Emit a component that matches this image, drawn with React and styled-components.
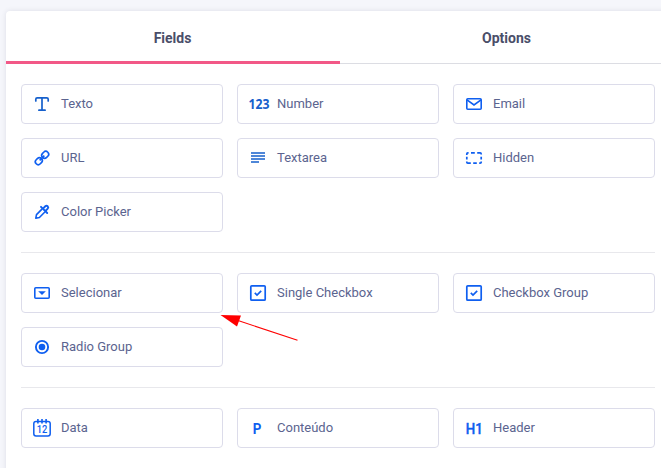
import React from 'react';
import styled, { createGlobalStyle } from 'styled-components';

const colors = {
  page: '#f5f6fb',
  white: '#ffffff',
  pink: '#f25887',
  border: '#dcdcea',
  line: '#dcdde3',
  title: '#4a4e69',
  text: '#5b648f',
  blue: '#0f5ff0',
  navy: '#1660cc'
};

const TextIcon = () => (
  <Icon>
    <path
      d="M5.8 8.9V7.2Q5.8 5.8 7.2 5.8H16.8Q18.2 5.8 18.2 7.2V8.9M12 5.8V18.2M8.9 18.2H15.1"
      stroke={colors.navy}
      strokeWidth="1.7"
      strokeLinecap="round"
    />
  </Icon>
);

const NumberIcon = () => (
  <Icon>
    <Glyph x="2.6" y="17.2" $color={colors.navy} $size={14.6} $family="Noto Sans" textLength="21" lengthAdjust="spacingAndGlyphs">
      123
    </Glyph>
  </Icon>
);

const EmailIcon = () => (
  <Icon>
    <rect x="4.8" y="6.8" width="14.4" height="10.4" rx="1" strokeWidth="1.6" />
    <path d="M5 7.8L12 13L19 7.8" strokeWidth="1.6" />
  </Icon>
);

const LinkIcon = () => (
  <Icon>
    <g transform="rotate(-45 12 12)" strokeWidth="1.6">
      <rect x="3.8" y="9.1" width="7.4" height="5.8" rx="2.9" />
      <rect x="12.8" y="9.1" width="7.4" height="5.8" rx="2.9" />
      <path d="M8.7 12H15.3" />
    </g>
  </Icon>
);

const TextareaIcon = () => (
  <Icon>
    <path
      d="M5 7H19M5 10H19M5 13H19M5 16H13"
      stroke={colors.navy}
      strokeWidth="1.7"
    />
  </Icon>
);

const HiddenIcon = () => (
  <Icon>
    <path
      d="M4.8 9V7.9Q4.8 6.9 5.8 6.9H6.6M9 6.9H12.8M15.2 6.9H18.2Q19.2 6.9 19.2 7.9V8.6M19.2 10.8V13.4M19.2 15.4V16.2Q19.2 17.1 18.2 17.1H17.2M14.8 17.1H11.2M8.8 17.1H5.8Q4.8 17.1 4.8 16.2V15.4M4.8 13.4V10.8"
      strokeWidth="1.7"
    />
  </Icon>
);

const PickerIcon = () => (
  <Icon>
    <path
      d="M12.2 8.9L6.5 14.6L5.8 18.2L9.4 17.5L15.1 11.8"
      strokeWidth="1.6"
      strokeLinejoin="round"
    />
    <path d="M11 6.8L17.2 13" strokeWidth="1.9" strokeLinecap="round" />
    <path
      d="M13 8.6L15.3 6.3Q16.5 5.2 17.7 6.3Q18.8 7.5 17.7 8.7L15.4 11"
      strokeWidth="1.9"
    />
  </Icon>
);

const SelectIcon = () => (
  <Icon>
    <rect x="4.8" y="6.8" width="14.4" height="10.4" rx="1" strokeWidth="1.6" />
    <path d="M8.2 10.2H15.8L12 14Z" fill={colors.blue} stroke="none" />
  </Icon>
);

const CheckboxIcon = () => (
  <Icon>
    <rect x="4.8" y="4.8" width="14.4" height="14.4" rx="1" strokeWidth="1.7" />
    <path d="M8.8 11.8L11 14L15.2 9.8" strokeWidth="1.7" />
  </Icon>
);

const RadioIcon = () => (
  <Icon>
    <circle cx="12" cy="12" r="6.1" strokeWidth="1.9" />
    <circle cx="12" cy="12" r="3.3" fill={colors.blue} stroke="none" />
  </Icon>
);

const DateIcon = () => (
  <Icon>
    <rect x="3.8" y="5.4" width="16.4" height="14.6" rx="2.2" strokeWidth="1.5" />
    <path d="M7.9 3V7.4M12 3V7.4M16.1 3V7.4" strokeWidth="1.6" />
    <Glyph x="6.8" y="17" $size={10} $weight={500} textLength="10.6" lengthAdjust="spacingAndGlyphs">
      12
    </Glyph>
  </Icon>
);

const ContentIcon = () => (
  <Icon>
    <Glyph x="6.8" y="18" $size={15} textLength="8.6" lengthAdjust="spacingAndGlyphs">
      P
    </Glyph>
  </Icon>
);

const HeaderIcon = () => (
  <Icon>
    <Glyph x="3.8" y="18" $size={15} $weight={500} $outline={0.4} textLength="17" lengthAdjust="spacingAndGlyphs">
      H1
    </Glyph>
  </Icon>
);

const groups = [
  [
    { label: 'Texto', icon: TextIcon },
    { label: 'Number', icon: NumberIcon },
    { label: 'Email', icon: EmailIcon },
    { label: 'URL', icon: LinkIcon },
    { label: 'Textarea', icon: TextareaIcon },
    { label: 'Hidden', icon: HiddenIcon },
    { label: 'Color Picker', icon: PickerIcon }
  ],
  [
    { label: 'Selecionar', icon: SelectIcon },
    { label: 'Single Checkbox', icon: CheckboxIcon },
    { label: 'Checkbox Group', icon: CheckboxIcon },
    { label: 'Radio Group', icon: RadioIcon }
  ],
  [
    { label: 'Data', icon: DateIcon },
    { label: 'Conteúdo', icon: ContentIcon },
    { label: 'Header', icon: HeaderIcon }
  ]
];

const App = () => (
  <Page>
    <GlobalStyle />
    <Panel>
      <Tabs>
        <Tab $active>Fields</Tab>
        <Tab>Options</Tab>
      </Tabs>
      <Content>
        {groups.map((fields, index) => (
          <Group key={index}>
            {fields.map(({ label, icon: FieldIcon }) => (
              <Field key={label}>
                <FieldIcon />
                {label}
              </Field>
            ))}
          </Group>
        ))}
      </Content>
    </Panel>
    <Arrow viewBox="0 0 80 28">
      <path d="M18 6.5L77.5 26.3" stroke="#ff0000" strokeWidth="1.1" />
      <path d="M0.5 1L21 1.4L17 12.6Z" fill="#ff0000" />
    </Arrow>
  </Page>
);

const GlobalStyle = createGlobalStyle`
  body {
    margin: 0;
    overflow: hidden;
    background: ${colors.page};
    font-family: Roboto, sans-serif;
  }
`;

const Page = styled.div`
  position: relative;
  width: 661px;
  height: 468px;
  overflow: hidden;
  box-sizing: border-box;
  padding: 11px 0 0 6px;
`;

const Panel = styled.div`
  width: 667px;
  height: 480px;
  background: ${colors.white};
  border-radius: 4px;
  box-shadow: 0 0 5px rgba(60, 64, 90, 0.13);
`;

const Tabs = styled.div`
  display: grid;
  grid-template-columns: 334px 333px;
  height: 53px;
`;

const Tab = styled.div`
  display: flex;
  align-items: center;
  justify-content: center;
  box-sizing: border-box;
  padding-top: ${({ $active }) => ($active ? '3px' : '1px')};
  padding-right: ${({ $active }) => ($active ? '1px' : '0')};
  border-bottom: ${({ $active }) =>
    $active ? `3px solid ${colors.pink}` : `1px solid ${colors.line}`};
  color: ${colors.title};
  font-size: 14px;
  font-weight: 700;
`;

const Content = styled.div`
  width: 634px;
  padding: 20px 0 0 15px;
`;

const Group = styled.div`
  display: grid;
  grid-template-columns: repeat(3, 202px);
  gap: 14px;

  & + & {
    margin-top: 20px;
    padding-top: 20px;
    border-top: 1px solid #e8e8ec;
  }
`;

const Field = styled.div`
  display: flex;
  align-items: center;
  gap: 7px;
  height: 40px;
  box-sizing: border-box;
  padding-left: 8px;
  border: 1px solid ${colors.border};
  border-radius: 4px;
  color: ${colors.text};
  font-size: 13px;
  line-height: 20px;
`;

const Icon = styled.svg.attrs({ viewBox: '0 0 24 24' })`
  flex: none;
  width: 24px;
  height: 24px;
  overflow: visible;
  fill: none;
  stroke: ${colors.blue};
`;

const Glyph = styled.text`
  fill: ${({ $color }) => $color || colors.blue};
  stroke-width: ${({ $outline }) => $outline || 0};
  font-family: ${({ $family }) => ($family ? `'${$family}', sans-serif` : 'inherit')};
  font-size: ${({ $size }) => $size}px;
  font-weight: ${({ $weight }) => $weight || 700};
`;

const Arrow = styled.svg`
  position: absolute;
  left: 220px;
  top: 314px;
  width: 80px;
  height: 28px;
  fill: none;
`;

export default App;
